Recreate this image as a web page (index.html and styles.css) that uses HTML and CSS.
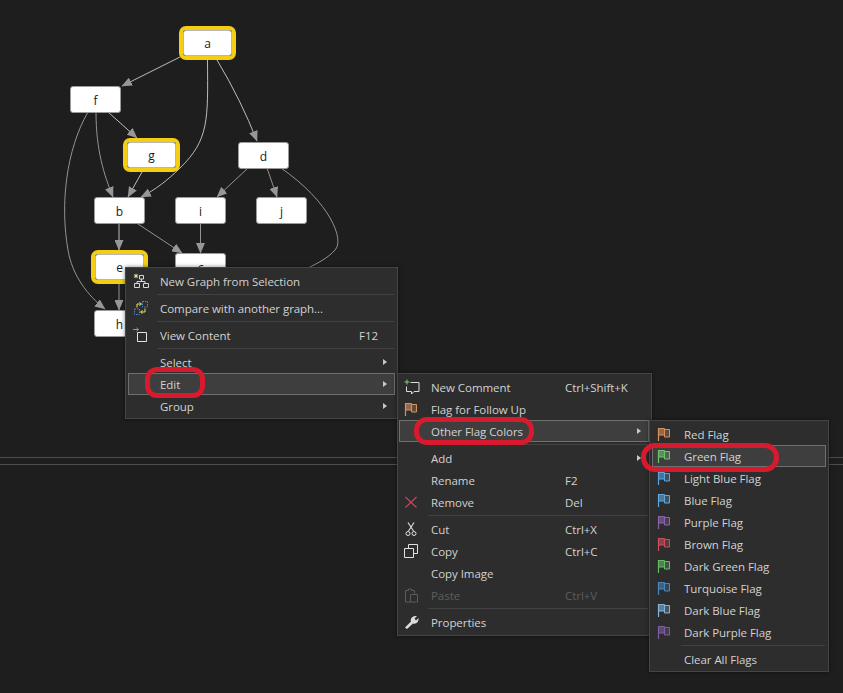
FILE: index.html
```html
<!DOCTYPE html>
<html lang="en">
<head>
<meta charset="utf-8">
<title>Dependency graph context menu</title>
<link rel="stylesheet" href="styles.css">
</head>
<body>
<svg class="defs" width="0" height="0" aria-hidden="true">
  <defs>
    <symbol id="flag" viewBox="0 0 16 16">
      <path d="M1.5 2v13" fill="none" stroke="currentColor" stroke-width="1.2"/>
      <path d="M1.5 2.5h6v6.5h-6z" fill="currentColor" fill-opacity=".6" stroke="currentColor"/>
      <path d="M7.5 3.5h5v7.5h-5z" fill="currentColor" fill-opacity=".3" stroke="currentColor"/>
    </symbol>
    <marker id="arrow" markerWidth="11" markerHeight="9" refX="10" refY="4.5" orient="auto" markerUnits="userSpaceOnUse">
      <path d="M0 0L10.500 4.500L0 9z" fill="#979797"/>
    </marker>
  </defs>
</svg>

<main class="app">
  <section class="graph">
    <svg class="edges" width="843" height="457" viewBox="0 0 843 457" aria-hidden="true">
      <g class="edge-light">
        <path d="M180 57L122 86" marker-end="url(#arrow)"/>
        <path d="M207.500 60C208 120 209 140 180 168C168 180 155 190 141 197" marker-end="url(#arrow)"/>
        <path d="M217 60Q241 100 257 141" marker-end="url(#arrow)"/>
        <path d="M108 112L137 138" marker-end="url(#arrow)"/>
        <path d="M119 224V250" marker-end="url(#arrow)"/>
        <path d="M142 172L128 197" marker-end="url(#arrow)"/>
      </g>
      <g class="edge-dim">
        <path d="M96 112C96 150 104 175 113 197" marker-end="url(#arrow)"/>
        <path d="M88 112C66 150 60 205 68 250C72 275 88 296 105 309" marker-end="url(#arrow)"/>
        <path d="M248 168L217 197" marker-end="url(#arrow)"/>
        <path d="M267 168L277 197" marker-end="url(#arrow)"/>
        <path d="M281 168C330 202 345 240 335 250C328 258 318 263 308 268"/>
        <path d="M138 224L182 253" marker-end="url(#arrow)"/>
        <path d="M200.500 224V253" marker-end="url(#arrow)"/>
        <path d="M119 284V310" marker-end="url(#arrow)"/>
      </g>
    </svg>
    <div class="node flagged node-a">a</div>
    <div class="node node-f">f</div>
    <div class="node flagged node-g">g</div>
    <div class="node node-d">d</div>
    <div class="node node-b">b</div>
    <div class="node node-i">i</div>
    <div class="node node-j">j</div>
    <div class="node flagged node-e">e</div>
    <div class="node node-c">c</div>
    <div class="node node-h">h</div>
  </section>
  <div class="pane-gap"></div>
  <section class="lower-pane"></section>
</main>

<nav class="menu menu-graph">
  <div class="row">
    <span class="icon"><svg width="16" height="16" viewBox="0 0 16 16">
      <path d="M3 .8v4.400M.8 3h4.400M1.400 1.400l3.200 3.200M4.600 1.400L1.400 4.600" stroke="#f2e49a" stroke-width=".9"/>
      <path d="M6.500 2.500h4v3.500h-4zM1.500 10.500h5v4h-5zM10.500 10.500h5v4h-5zM8.500 6v2.500M4 10.500v-2h8v2" fill="none" stroke="#d8d8d8"/>
    </svg></span>
    <span class="label">New Graph from Selection</span>
  </div>
  <div class="sep"></div>
  <div class="row">
    <span class="icon"><svg width="16" height="16" viewBox="0 0 16 16">
      <path d="M1.500 9h5v5.500h-5zM9.500 1.500h5v5.500h-5z" fill="none" stroke="#4d86d9" stroke-dasharray="1.500 1"/>
      <path d="M4 7.500V4h4M6.500 2.500L8.500 4L6.500 5.500M12 8.500V12H8M9.500 10.500L7.500 12L9.500 13.500" fill="none" stroke="#dfe86a"/>
    </svg></span>
    <span class="label">Compare with another graph...</span>
  </div>
  <div class="sep"></div>
  <div class="row">
    <span class="icon"><svg width="16" height="16" viewBox="0 0 16 16">
      <path d="M0 2.500h5M3.500 .8L5.500 2.500L3.500 4.200" fill="none" stroke="#5aa6e0"/>
      <path d="M4.500 5.500h9v9h-9z" fill="none" stroke="#e2e2e2"/>
    </svg></span>
    <span class="label">View Content</span>
    <span class="shortcut">F12</span>
  </div>
  <div class="sep"></div>
  <div class="row"><span class="icon"></span><span class="label">Select</span><span class="arrow"></span></div>
  <div class="row hover"><span class="icon"></span><span class="label">Edit</span><span class="arrow"></span></div>
  <div class="row"><span class="icon"></span><span class="label">Group</span><span class="arrow"></span></div>
</nav>

<nav class="menu menu-edit">
  <div class="row">
    <span class="icon"><svg width="16" height="16" viewBox="0 0 16 16">
      <path d="M3 .5v5M.5 3h5" stroke="#7fd07f"/>
      <path d="M6.500 3.500h8.500v9h-5l-2.500 2.500v-2.500h-5v-5" fill="none" stroke="#dcdcdc"/>
    </svg></span>
    <span class="label">New Comment</span><span class="shortcut">Ctrl+Shift+K</span>
  </div>
  <div class="row">
    <span class="icon flag-red"><svg width="16" height="16"><use href="#flag"/></svg></span>
    <span class="label">Flag for Follow Up</span>
  </div>
  <div class="row hover"><span class="icon"></span><span class="label">Other Flag Colors</span><span class="arrow"></span></div>
  <div class="sep"></div>
  <div class="row"><span class="icon"></span><span class="label">Add</span><span class="arrow"></span></div>
  <div class="row"><span class="icon"></span><span class="label">Rename</span><span class="shortcut">F2</span></div>
  <div class="row">
    <span class="icon"><svg width="16" height="16" viewBox="0 0 16 16">
      <path d="M1.500 3l11 10.500M12.500 3l-11 10.500" stroke="#c8475a" stroke-width="1.100"/>
    </svg></span>
    <span class="label">Remove</span><span class="shortcut">Del</span>
  </div>
  <div class="sep"></div>
  <div class="row">
    <span class="icon"><svg width="16" height="16" viewBox="0 0 16 16">
      <path d="M4 1.500L9.500 10M10 1.500L4.500 10" fill="none" stroke="#e2e2e2" stroke-width="1.100"/>
      <circle cx="4" cy="12.500" r="2" fill="none" stroke="#e2e2e2"/>
      <circle cx="10" cy="12.500" r="2" fill="none" stroke="#e2e2e2"/>
    </svg></span>
    <span class="label">Cut</span><span class="shortcut">Ctrl+X</span>
  </div>
  <div class="row">
    <span class="icon"><svg width="16" height="16" viewBox="0 0 16 16">
      <path d="M4.500 5V1.500h9v9H9.500" fill="none" stroke="#e2e2e2"/>
      <path d="M.5 5.500h9v9h-9z" fill="none" stroke="#e2e2e2"/>
    </svg></span>
    <span class="label">Copy</span><span class="shortcut">Ctrl+C</span>
  </div>
  <div class="row"><span class="icon"></span><span class="label">Copy Image</span></div>
  <div class="row disabled">
    <span class="icon"><svg width="16" height="16" viewBox="0 0 16 16">
      <path d="M1.500 15V3.500h3V2h3v1.500h3v3M6.500 7.500h7v7.500h-7zM1.500 15h5" fill="none" stroke="#5c5c5c"/>
    </svg></span>
    <span class="label">Paste</span><span class="shortcut">Ctrl+V</span>
  </div>
  <div class="sep"></div>
  <div class="row">
    <span class="icon"><svg width="16" height="16" viewBox="0 0 16 16">
      <path d="M1 13.500L7 7.500C6 4.500 8.500 1.500 13 2L10.500 4.500L12 6.500L14.500 4C15 8 12 10.500 9 9.500L3 15z" fill="#dcdcdc"/>
    </svg></span>
    <span class="label">Properties</span>
  </div>
</nav>

<nav class="menu menu-flags">
  <div class="row"><span class="icon flag-red"><svg width="16" height="16"><use href="#flag"/></svg></span><span class="label">Red Flag</span></div>
  <div class="row hover"><span class="icon flag-green"><svg width="16" height="16"><use href="#flag"/></svg></span><span class="label">Green Flag</span></div>
  <div class="row"><span class="icon flag-light-blue"><svg width="16" height="16"><use href="#flag"/></svg></span><span class="label">Light Blue Flag</span></div>
  <div class="row"><span class="icon flag-blue"><svg width="16" height="16"><use href="#flag"/></svg></span><span class="label">Blue Flag</span></div>
  <div class="row"><span class="icon flag-purple"><svg width="16" height="16"><use href="#flag"/></svg></span><span class="label">Purple Flag</span></div>
  <div class="row"><span class="icon flag-brown"><svg width="16" height="16"><use href="#flag"/></svg></span><span class="label">Brown Flag</span></div>
  <div class="row"><span class="icon flag-dark-green"><svg width="16" height="16"><use href="#flag"/></svg></span><span class="label">Dark Green Flag</span></div>
  <div class="row"><span class="icon flag-turquoise"><svg width="16" height="16"><use href="#flag"/></svg></span><span class="label">Turquoise Flag</span></div>
  <div class="row"><span class="icon flag-dark-blue"><svg width="16" height="16"><use href="#flag"/></svg></span><span class="label">Dark Blue Flag</span></div>
  <div class="row"><span class="icon flag-dark-purple"><svg width="16" height="16"><use href="#flag"/></svg></span><span class="label">Dark Purple Flag</span></div>
  <div class="sep"></div>
  <div class="row"><span class="icon"></span><span class="label">Clear All Flags</span></div>
</nav>

<div class="callout callout-edit"></div>
<div class="callout callout-other"></div>
<div class="callout callout-green"></div>
</body>
</html>
```

FILE: styles.css
```css
* {
  box-sizing: border-box;
}

html,
body {
  margin: 0;
  height: 100%;
}

body {
  position: relative;
  overflow: hidden;
  background: #1e1e1e;
  font-family: "Open Sans", "Noto Sans", sans-serif;
  font-size: 11.5px;
  letter-spacing: -0.05px;
  color: #d2d2d2;
}

.defs {
  position: absolute;
}

.app {
  display: flex;
  flex-direction: column;
  height: 693px;
}

.graph {
  position: relative;
  flex: 0 0 458px;
  border-bottom: 1px solid #4d4d4d;
}

.pane-gap {
  flex: 0 0 7px;
  border-bottom: 1px solid #4d4d4d;
}

.lower-pane {
  flex: 1;
}

.edges {
  position: absolute;
  left: 0;
  top: 0;
}

.edges path {
  fill: none;
}

.edge-light path {
  stroke: #bcbcbc;
  stroke-width: 1;
}

.edge-dim path {
  stroke: #939393;
  stroke-width: 1;
}

.node {
  position: absolute;
  display: flex;
  align-items: center;
  justify-content: center;
  width: 51px;
  height: 27px;
  padding-top: 2px;
  background: #fff;
  border: 1px solid #9a9a9a;
  border-radius: 3px;
  color: #1a1a1a;
  font-size: 12px;
  line-height: 1;
}

.node.flagged {
  width: 49px;
  height: 26px;
  border-color: #b8b8b0;
  outline: 4px solid #f4ce14;
  outline-offset: 0;
}

.node-a { left: 183px; top: 30px; }
.node-f { left: 70px; top: 86px; }
.node-g { left: 127px; top: 142px; }
.node-d { left: 238px; top: 142px; }
.node-b { left: 94px; top: 197px; }
.node-i { left: 175px; top: 197px; }
.node-j { left: 256px; top: 197px; }
.node-e { left: 95px; top: 254px; }
.node-c { left: 175px; top: 253px; }
.node-h { left: 94px; top: 310px; }

.menu {
  position: absolute;
  padding: 2px;
  background: #2d2d2d;
  border: 1px solid #454545;
  box-shadow: 0 0 4px rgba(0, 0, 0, 0.5);
}

.menu-graph {
  left: 125px;
  top: 267px;
  width: 273px;
  padding-bottom: 1px;
}

.menu-edit {
  left: 397px;
  top: 373px;
  width: 255px;
  padding-left: 1px;
}

.menu-flags {
  left: 649px;
  top: 420px;
  width: 180px;
  padding-bottom: 1px;
}

.row {
  display: flex;
  align-items: center;
  height: 22px;
  border: 1px solid transparent;
}

.row.hover {
  background: #3e3e3e;
  border-color: #6f6f6f;
}

.row.disabled {
  color: #5e5e5e;
}

.icon {
  flex: 0 0 31px;
  display: flex;
  align-items: center;
  padding-left: 4px;
}

.label {
  flex: 1;
  white-space: nowrap;
}

.shortcut {
  white-space: nowrap;
}

.menu-graph .shortcut {
  flex: 0 0 35px;
}

.menu-edit .shortcut {
  flex: 0 0 83px;
}

.arrow {
  width: 0;
  height: 0;
  margin-right: 7px;
  border-top: 3.5px solid transparent;
  border-bottom: 3.5px solid transparent;
  border-left: 4px solid #c8c8c8;
}

.sep {
  height: 1px;
  margin: 2px 1px 2px 29px;
  background: #424242;
}

.flag-red { color: #d8915f; }
.flag-green { color: #6fc46f; }
.flag-light-blue { color: #5aa5dc; }
.flag-blue { color: #5fa9df; }
.flag-purple { color: #8a64aa; }
.flag-brown { color: #c9505f; }
.flag-dark-green { color: #66bb66; }
.flag-turquoise { color: #4a86ba; }
.flag-dark-blue { color: #84b4da; }
.flag-dark-purple { color: #7c5da2; }

.callout {
  position: absolute;
  border: 5px solid #d81a2e;
}

.callout-edit {
  left: 145px;
  top: 367px;
  width: 60px;
  height: 31px;
  border-radius: 12px;
}

.callout-other {
  left: 414px;
  top: 417px;
  width: 120px;
  height: 28px;
  border-radius: 13px;
}

.callout-green {
  left: 641px;
  top: 443px;
  width: 138px;
  height: 29px;
  border-radius: 14px;
}
```
